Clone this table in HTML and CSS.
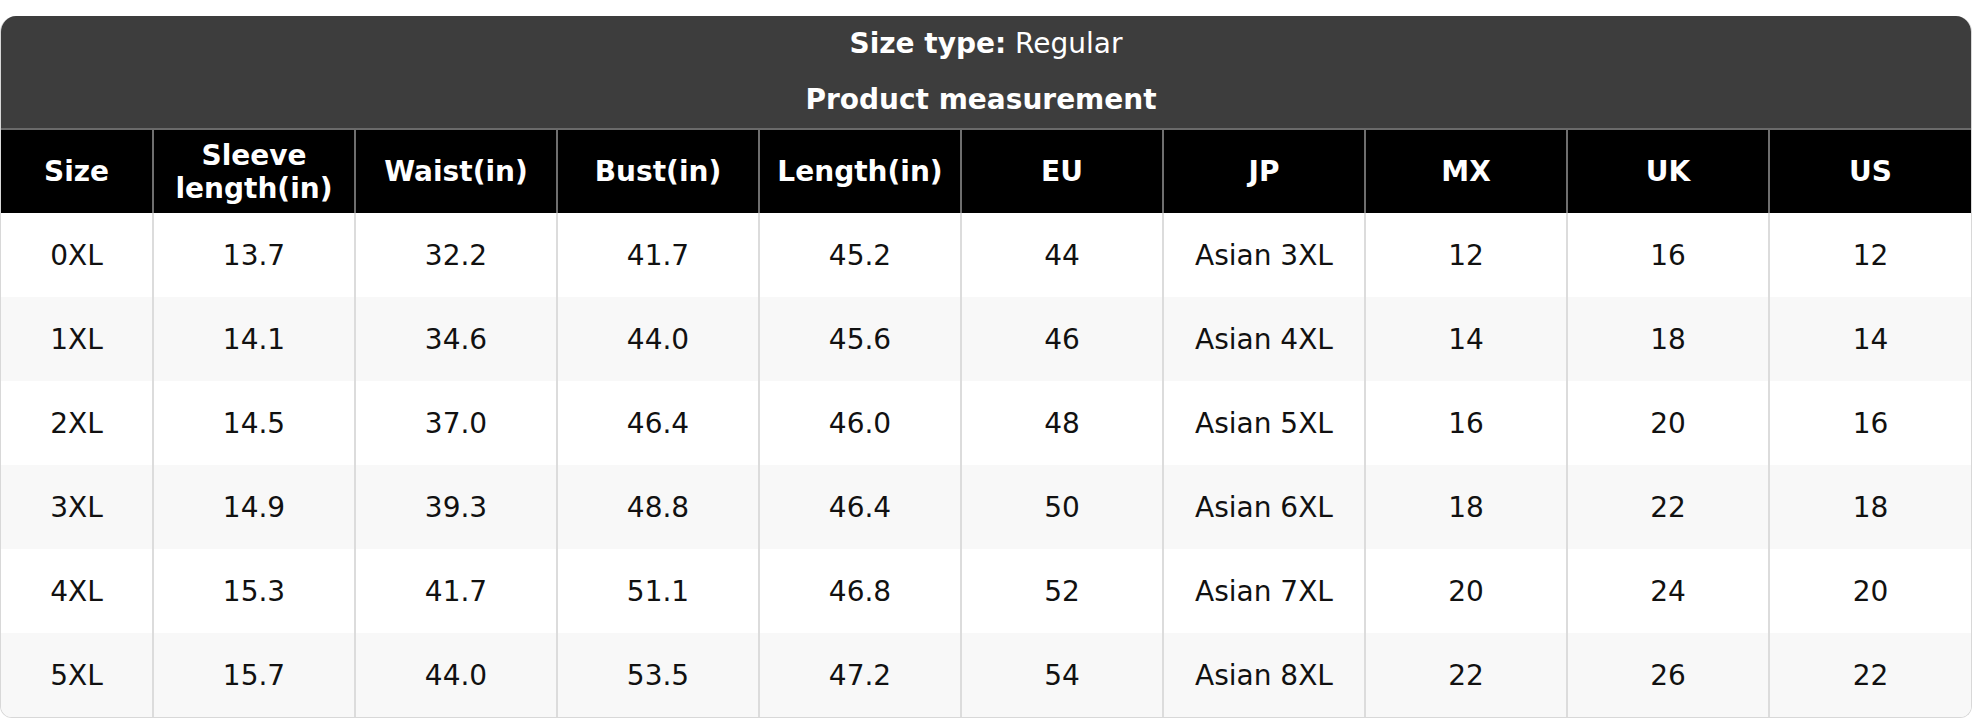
FILE: index.html
```html
<!DOCTYPE html>
<html lang="en">
<head>
<meta charset="utf-8">
<title>Size chart</title>
<link rel="stylesheet" href="styles.css">
</head>
<body>
<div class="chart">
  <div class="title">
    <div class="title-line"><strong>Size type:</strong> Regular</div>
    <div class="title-line title-sub"><strong>Product measurement</strong></div>
  </div>
  <table class="grid">
    <colgroup>
      <col class="col-size">
      <col><col><col><col><col><col><col><col><col>
    </colgroup>
    <thead>
      <tr>
        <th>Size</th>
        <th>Sleeve<br>length(in)</th>
        <th>Waist(in)</th>
        <th>Bust(in)</th>
        <th>Length(in)</th>
        <th>EU</th>
        <th>JP</th>
        <th>MX</th>
        <th>UK</th>
        <th>US</th>
      </tr>
    </thead>
    <tbody>
      <tr><td>0XL</td><td>13.7</td><td>32.2</td><td>41.7</td><td>45.2</td><td>44</td><td>Asian 3XL</td><td>12</td><td>16</td><td>12</td></tr>
      <tr><td>1XL</td><td>14.1</td><td>34.6</td><td>44.0</td><td>45.6</td><td>46</td><td>Asian 4XL</td><td>14</td><td>18</td><td>14</td></tr>
      <tr><td>2XL</td><td>14.5</td><td>37.0</td><td>46.4</td><td>46.0</td><td>48</td><td>Asian 5XL</td><td>16</td><td>20</td><td>16</td></tr>
      <tr><td>3XL</td><td>14.9</td><td>39.3</td><td>48.8</td><td>46.4</td><td>50</td><td>Asian 6XL</td><td>18</td><td>22</td><td>18</td></tr>
      <tr><td>4XL</td><td>15.3</td><td>41.7</td><td>51.1</td><td>46.8</td><td>52</td><td>Asian 7XL</td><td>20</td><td>24</td><td>20</td></tr>
      <tr><td>5XL</td><td>15.7</td><td>44.0</td><td>53.5</td><td>47.2</td><td>54</td><td>Asian 8XL</td><td>22</td><td>26</td><td>22</td></tr>
    </tbody>
  </table>
</div>
</body>
</html>
```
FILE: styles.css
```css
html, body {
  margin: 0;
  padding: 0;
  background: #ffffff;
}
body {
  padding-top: 16px;
  font-family: "DejaVu Sans", "Liberation Sans", sans-serif;
  font-size: 28px;
  color: #111111;
}
.chart {
  width: 1972px;
  box-sizing: border-box;
  border: 1px solid #d8d8d8;
  border-top: none;
  border-radius: 16px 16px 12px 12px;
  overflow: hidden;
}
.title {
  background: #3d3d3d;
  color: #ffffff;
  text-align: center;
  border-bottom: 2px solid #6a6a6a;
}
.title-line {
  height: 56px;
  line-height: 56px;
}
.title-sub {
  padding-right: 10px;
}
.title strong {
  font-weight: bold;
}
.grid {
  width: 100%;
  table-layout: fixed;
  border-collapse: collapse;
  border-spacing: 0;
}
.col-size {
  width: 152px;
}
.grid th {
  background: #000000;
  color: #ffffff;
  font-weight: bold;
  height: 83px;
  padding: 0 4px;
  line-height: 33px;
  text-align: center;
  vertical-align: middle;
  border-left: 2px solid #6e6e6e;
}
.grid th:first-child {
  border-left: none;
}
.grid td {
  height: 84px;
  padding: 0 4px;
  text-align: center;
  vertical-align: middle;
  border-left: 2px solid #dcdcdc;
}
.grid td:first-child {
  border-left: none;
}
.grid tbody tr:nth-child(even) td {
  background: #f8f8f8;
}
```
